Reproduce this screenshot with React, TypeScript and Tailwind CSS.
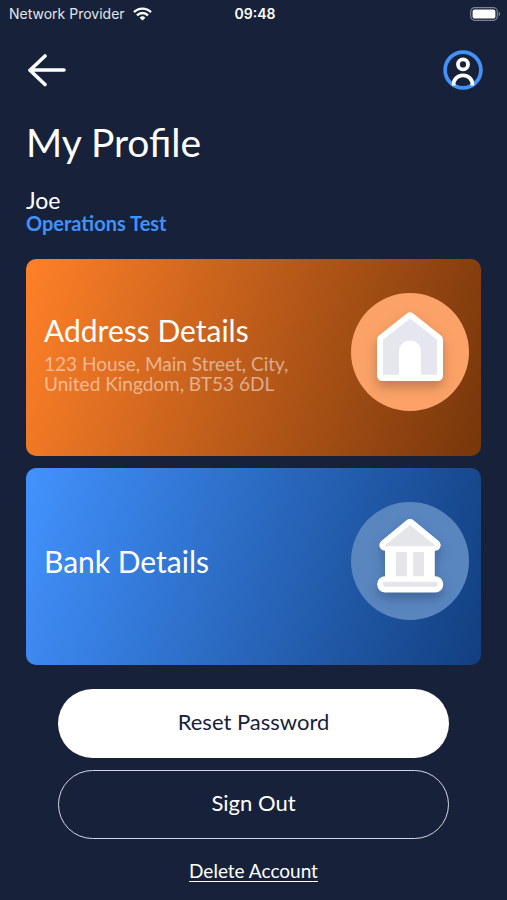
import React from 'react';

interface DetailCardProps {
  title: string;
  lines?: string[];
  className: string;
  circleClassName: string;
  icon: React.ReactNode;
}

const WifiIcon = () => (
  <svg width="19" height="14" viewBox="0 0 19 14" fill="none" stroke="#fff" strokeWidth="2.4" aria-hidden="true">
    <path d="M1 5.2 A12 12 0 0 1 18 5.2" />
    <path d="M4 8.3 A7.8 7.8 0 0 1 15 8.3" />
    <path d="M9.5 13.6 L6.6 10.7 A4.2 4.2 0 0 1 12.4 10.7 Z" fill="#fff" stroke="none" />
  </svg>
);

const BatteryIcon = () => (
  <svg width="31" height="14" viewBox="0 0 31 14" fill="none" aria-hidden="true">
    <rect x="0.7" y="0.7" width="26.6" height="12.6" rx="4" stroke="#7c8393" strokeWidth="1.2" />
    <rect x="2.6" y="2.4" width="22.8" height="9.2" rx="2.2" fill="#fff" />
    <path d="M28.7 4.8 C30.6 5.4 30.6 8.6 28.7 9.2 Z" fill="#7c8393" />
  </svg>
);

const BackArrow = () => (
  <svg width="40" height="34" viewBox="0 0 40 34" fill="none" stroke="#fff" strokeWidth="3.6" strokeLinecap="round" strokeLinejoin="round" aria-hidden="true">
    <path d="M38 17 H4 M19 3 L4 17.3 L19 31.5" />
  </svg>
);

const ProfileIcon = () => (
  <svg width="40" height="40" viewBox="0 0 40 40" fill="none" aria-hidden="true">
    <circle cx="20" cy="20" r="17.9" stroke="#4292fb" strokeWidth="3.7" />
    <circle cx="20" cy="14.4" r="5" stroke="#fff" strokeWidth="3.8" />
    <path d="M10.6 35.4 V34.4 C10.6 29 14.8 25.3 20 25.3 C25.2 25.3 29.4 29 29.4 34.4 V35.4" stroke="#fff" strokeWidth="3.8" />
  </svg>
);

const HouseIcon = () => (
  <svg width="118" height="118" viewBox="0 0 118 118" className="drop-shadow-[0_6px_6px_rgba(60,30,20,0.3)]" aria-hidden="true">
    <path
      d="M59 24.6 L86.8 46.5 V82.7 H31.2 V46.5 Z"
      fill="#fff"
      stroke="#fff"
      strokeWidth="10.4"
      strokeLinejoin="round"
    />
    <path d="M59 25.5 L86 46.8 V81.8 H32 V46.8 Z" fill="#e6e7ee" />
    <path d="M48 82.5 V58.5 A11 11 0 0 1 70 58.5 V82.5 Z" fill="#fff" />
  </svg>
);

const BankIcon = () => (
  <svg width="118" height="118" viewBox="0 0 118 118" className="drop-shadow-[0_6px_6px_rgba(20,40,80,0.35)]" aria-hidden="true">
    <rect x="34" y="44" width="49.8" height="36" fill="#fff" />
    <path
      d="M59 22.5 L84.2 43.2 H33.8 Z"
      fill="#fff"
      stroke="#fff"
      strokeWidth="11"
      strokeLinejoin="round"
    />
    <path d="M59 23.6 L84 43.8 H34 Z" fill="#e5e6ea" stroke="#e5e6ea" strokeLinejoin="round" />
    <rect x="45" y="50" width="11" height="25" fill="#e5e6ea" />
    <rect x="62" y="50" width="11" height="25" fill="#e5e6ea" />
    <rect x="26.2" y="74.2" width="66" height="16.4" rx="8" fill="#fff" />
    <rect x="32" y="79.8" width="54.5" height="5" rx="2" fill="#e5e6ea" />
  </svg>
);

const DetailCard: React.FC<DetailCardProps> = ({ title, lines = [], className, circleClassName, icon }) => (
  <button
    type="button"
    className={`flex h-[197px] w-full items-center justify-between rounded-[10px] pb-3 pl-[18px] pr-3 text-left ${className}`}
  >
    <span className="flex flex-col">
      <span className="text-[30px] leading-10">{title}</span>
      {lines.length > 0 && (
        <span className="mt-1 flex flex-col text-[19px] leading-5 text-white/50">
          {lines.map((line) => (
            <span key={line}>{line}</span>
          ))}
        </span>
      )}
    </span>
    <span className={`size-[118px] shrink-0 rounded-full ${circleClassName}`}>{icon}</span>
  </button>
);

export default function App() {
  return (
    <div className="min-h-screen bg-[#17223a] font-[Lato,sans-serif] text-white">
      <div className="grid h-7 grid-cols-3 items-center pl-[9px] pr-[6px] font-[Inter,sans-serif] text-sm">
        <div className="flex items-center gap-2 whitespace-nowrap text-[#e3e6ec]">
          <span>Network Provider</span>
          <WifiIcon />
        </div>
        <div className="text-center font-semibold">09:48</div>
        <div className="flex justify-end">
          <BatteryIcon />
        </div>
      </div>

      <header className="mt-[22px] flex items-center justify-between px-6">
        <button type="button" aria-label="Back" className="pl-[2px]">
          <BackArrow />
        </button>
        <button type="button" aria-label="Profile">
          <ProfileIcon />
        </button>
      </header>

      <main className="px-[26px] pt-[26px]">
        <h1 className="text-[39px] leading-[52px]">My Profile</h1>
        <p className="mt-5 text-[23px] leading-6">Joe</p>
        <p className="text-xl font-bold leading-[22px] text-[#4292fb]">Operations Test</p>

        <div className="mt-[25px] flex flex-col gap-3">
          <DetailCard
            title="Address Details"
            lines={['123 House, Main Street, City,', 'United Kingdom, BT53 6DL']}
            className="bg-linear-[106deg] from-[#ff8028] to-[#77360b]"
            circleClassName="bg-[#fba268]"
            icon={<HouseIcon />}
          />
          <DetailCard
            title="Bank Details"
            className="bg-linear-[106deg] from-[#4292fe] to-[#123f80]"
            circleClassName="bg-[#5a86c0]"
            icon={<BankIcon />}
          />
        </div>

        <div className="flex flex-col gap-3 px-8 pt-6 text-[22px]">
          <button type="button" className="h-[69px] rounded-full bg-white pb-1 text-[#17223a]">
            Reset Password
          </button>
          <button type="button" className="h-[69px] rounded-full border border-[#d5d9e0] pb-1">
            Sign Out
          </button>
        </div>
        <div className="pt-5 text-center">
          <a href="#delete" className="text-[19px] leading-6 underline underline-offset-3">
            Delete Account
          </a>
        </div>
      </main>
    </div>
  );
}
